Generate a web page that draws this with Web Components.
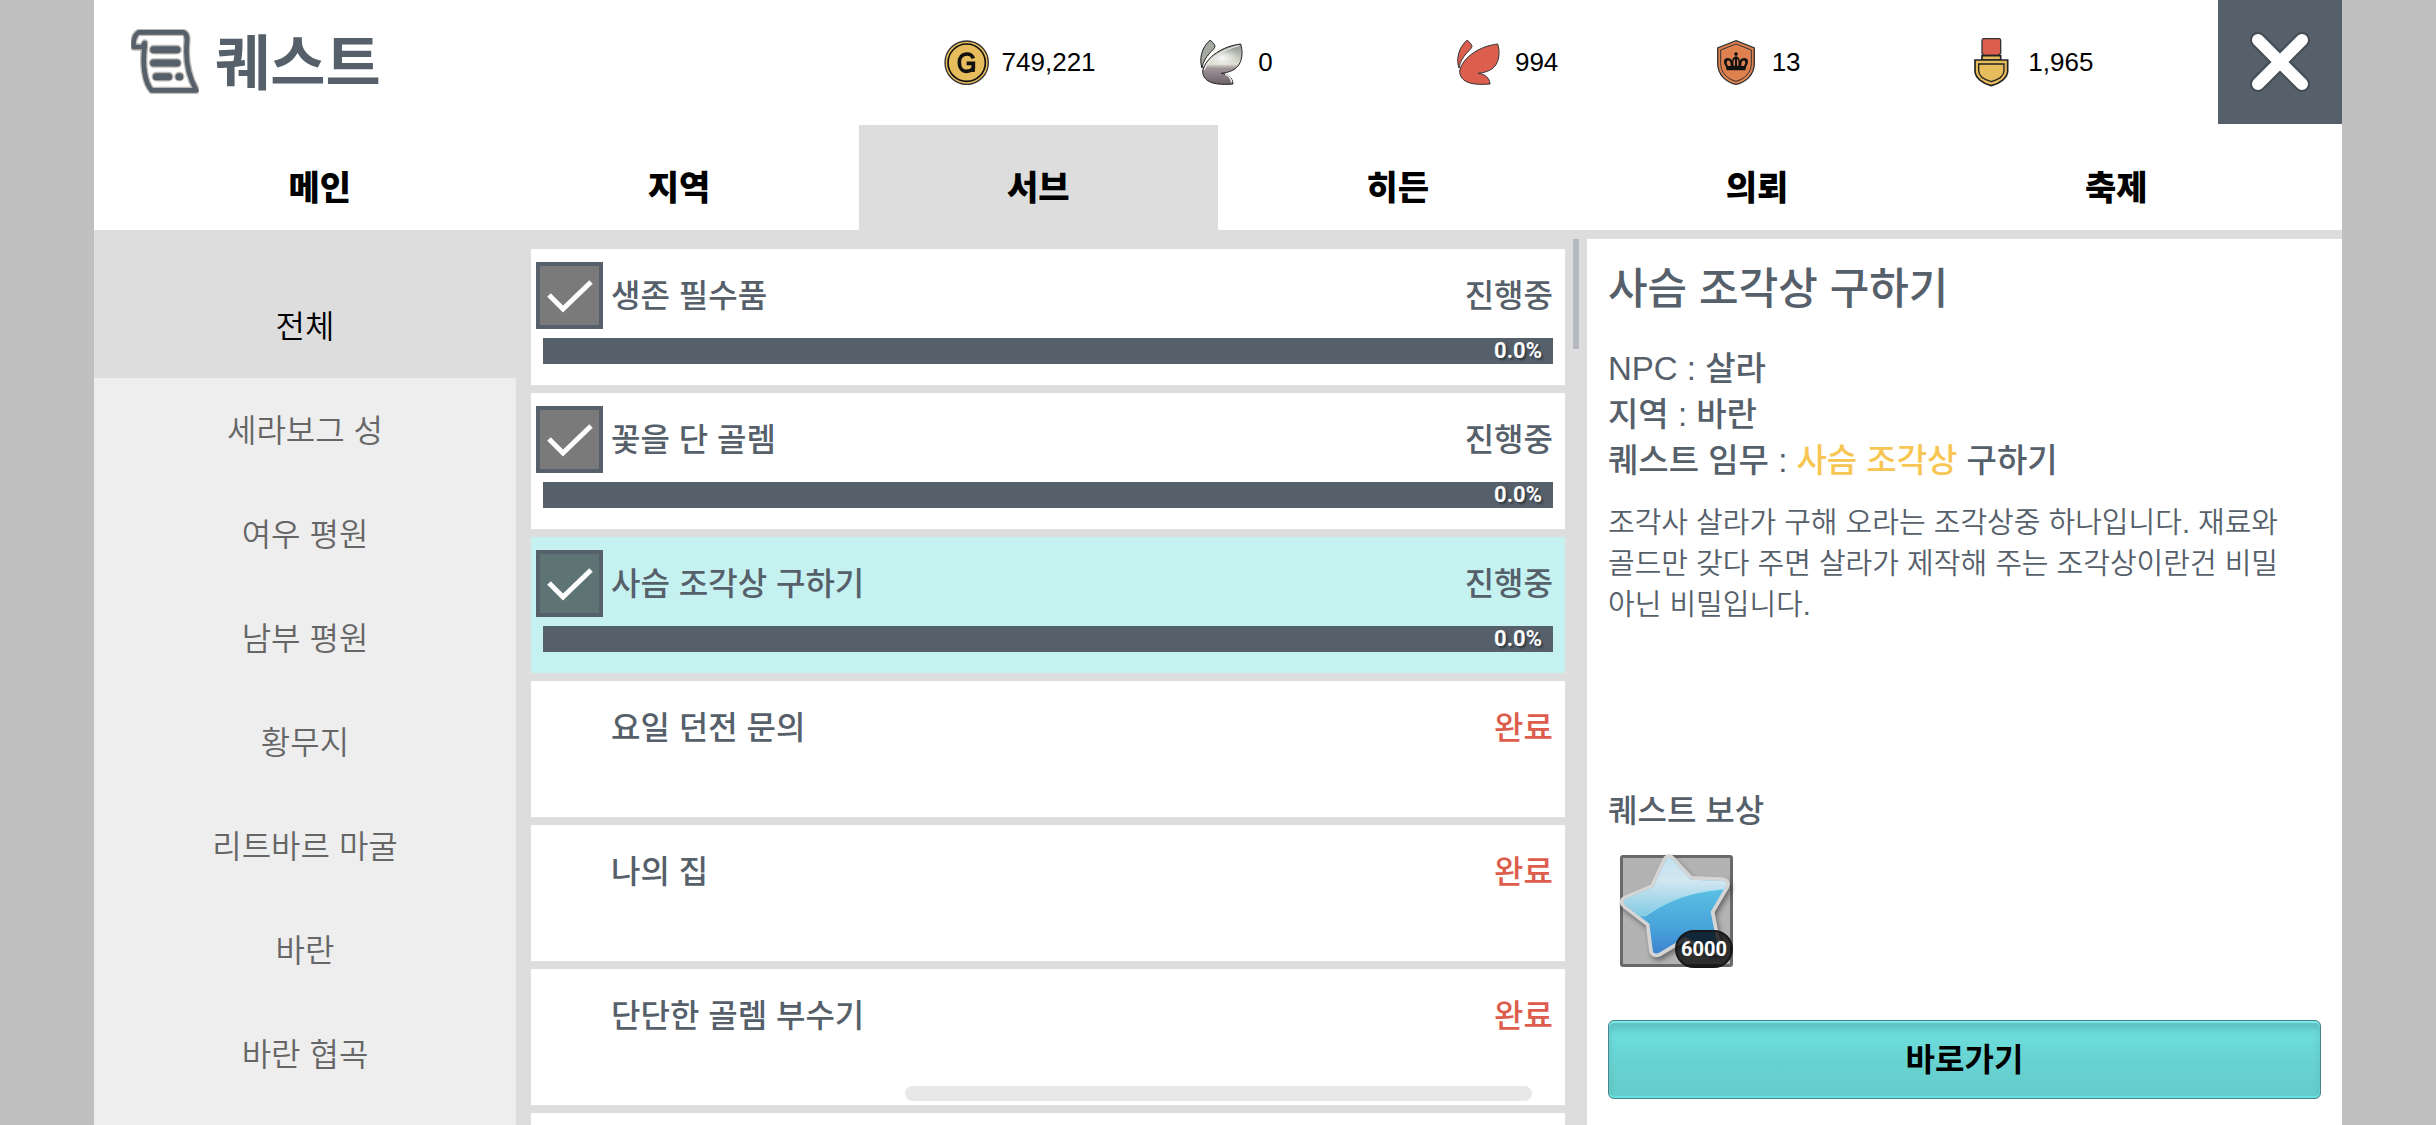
<!DOCTYPE html>
<html lang="ko">
<head>
<meta charset="utf-8">
<title>퀘스트</title>
<style>
  html, body { margin: 0; height: 100%; }
  body {
    background: #c0c0c0;
    color: #56606a;
    font-family: 'Liberation Sans', 'Noto Sans CJK KR', sans-serif;
    overflow: hidden;
  }
</style>
</head>
<body>
<quest-app></quest-app>

<script>
(function () {
  /* ── shared reset, prepended to every shadow root ──
     No universal margin/padding rule here: it would beat the :host box
     of the elements nested in that root. */
  var RESET = `
    :host, * { box-sizing: border-box; }
    h1, h2, h3, p, ul, button, input { margin: 0; padding: 0; }
    button { font: inherit; color: inherit; background: none; border: 0; cursor: pointer; }
    ul { list-style: none; }
    svg { display: block; }
  `;

  var WING = 'M8 92C18 50 70 18 122 12C128 30 128 55 118 72C108 90 85 98 64 100C82 102 98 112 99 132C50 136 8 130 8 92Z';
  var ANTENNA = 'M30 1C36 4 44 12 45 19C44 30 12 46 6 84C-3 60 4 22 30 1Z';
  var STAR = 'M138 16Q146 2 156 14L212 74L308 78Q324 82 316 96L272 170L293 276Q290 296 272 286L196 246L116 294Q100 300 98 284L88 206L16 150Q4 140 18 132L100 97Z';

  var ICONS = {
    gold: `
      <circle cx="68" cy="68" r="65" fill="#e6bc5c" stroke="#333" stroke-width="4"/>
      <circle cx="68" cy="68" r="56" fill="none" stroke="#111" stroke-width="5"/>
      <path d="M88 55C85 46 78 42 69 42C54 42 46 53 46 68C46 84 55 94 68 94C77 94 83 91 88 84V70H68" fill="none" stroke="#111" stroke-width="11"/>
      <path d="M88 74V96" stroke="#111" stroke-width="9"/>`,
    silver: `
      <defs><linearGradient id="g" x1="0" y1="0" x2="0" y2="1">
        <stop offset="0" stop-color="#8d958f"/><stop offset=".5" stop-color="#dcdccf"/>
        <stop offset=".6" stop-color="#a0969a"/><stop offset="1" stop-color="#6e6068"/>
      </linearGradient>
      <radialGradient id="r" cx=".5" cy=".6" r=".5">
        <stop offset="0" stop-color="#fff" stop-opacity=".9"/><stop offset="1" stop-color="#fff" stop-opacity="0"/>
      </radialGradient></defs>
      <path d="${ANTENNA}" fill="#a5aaa0" stroke="#222" stroke-width="3"/>
      <path d="${WING}" fill="url(#g)" stroke="#222" stroke-width="3"/>
      <path d="M14 76C34 48 76 26 118 18C122 40 120 60 112 74Z" fill="url(#r)"/>
      <path d="M13 90C26 52 70 28 118 17" fill="none" stroke="#f4f4f0" stroke-width="3"/>
      <path d="M76 103C88 108 94 116 95 128" fill="none" stroke="#eee" stroke-width="4"/>`,
    red: `
      <path d="${ANTENNA}" fill="#db5e4e" stroke="#333" stroke-width="3"/>
      <path d="${WING}" fill="#db5e4e" stroke="#333" stroke-width="3"/>`,
    shield: `
      <path d="M66 2L121 24V70C121 104 96 127 66 133C36 127 11 104 11 70V24Z" fill="#df814f" stroke="#333" stroke-width="4"/>
      <path d="M66 12L112 30V70C112 98 92 117 66 124C40 117 20 98 20 70V30Z" fill="none" stroke="#333" stroke-width="3"/>
      <path d="M38 91L35 79C26 66 30 54 40 54C48 54 52 58 55 62C55 54 59 50 66 50C73 50 77 54 77 62C80 58 84 54 92 54C102 54 106 66 97 79L94 91Z" fill="#111"/>
      <path d="M66 37V50M60 42H72" stroke="#111" stroke-width="5"/>
      <path d="M42 78C35 68 38 60 46 62C50 65 50 72 50 78M59 77C57 66 59 58 63 57V77M73 77C75 66 73 58 69 57V77M90 78C97 68 94 60 86 62C82 65 82 72 82 78" fill="#df814f"/>`,
    medal: `
      <path d="M40 -4H88Q92 -4 92 2V40L86 46H42L36 40V2Q36 -4 40 -4Z" fill="#db5e4e" stroke="#333" stroke-width="4"/>
      <path d="M36 47H92V60H36Z" fill="#e6bc5c" stroke="#222" stroke-width="5"/>
      <path d="M15 60H113V92C113 114 90 130 64 137C38 130 15 114 15 92Z" fill="#e6bc5c" stroke="#222" stroke-width="5"/>
      <path d="M26 72H102V92C102 107 84 119 64 125C44 119 26 107 26 92Z" fill="none" stroke="#222" stroke-width="4"/>`
  };

  function define(name, render) {
    customElements.define(name, class extends HTMLElement {
      connectedCallback() {
        if (this.shadowRoot) return;
        this.attachShadow({ mode: 'open' });
        var out = render(this);
        this.shadowRoot.innerHTML = '<style>' + RESET + out.style + '</style>' + out.html;
      }
    });
  }

  /* ── header ── */
  define('currency-item', function (el) {
    return {
      style: `
        :host { display: flex; align-items: center; gap: 13px; color: #000; font-size: 26px; line-height: 32px; }
        svg { width: 45px; height: 45px; flex: none; overflow: visible; }
      `,
      html: `<svg viewBox="0 0 135 135" aria-hidden="true">${ICONS[el.getAttribute('icon')]}</svg><span><slot></slot></span>`
    };
  });

  define('quest-header', function () {
    return {
      style: `
        :host { display: grid; grid-template-columns: 2fr 3fr 124px; height: 124px; flex: none; background: #fff; }
        .title { display: flex; align-items: center; gap: 16px; padding-left: 37px; }
        .title svg { width: 68px; height: 66px; }
        h1 { padding-top: 6px; font-size: 60px; line-height: 72px; font-weight: 700; }
        .wallet { display: grid; grid-template-columns: repeat(5, minmax(0, 1fr)); gap: 17px; padding-right: 8px; }
        .close { background: #56606a; display: flex; align-items: center; justify-content: center; }
        .close svg { width: 64px; height: 64px; }
      `,
      html: `
        <div class="title">
          <svg viewBox="0 0 204 198" fill="none" stroke="#56606a" stroke-linecap="round" stroke-linejoin="round" aria-hidden="true">
            <path d="M24 10H156C170 14 169 30 167 48C164 92 172 142 196 184H62C40 160 34 104 41 52V42L35 54H8C6 34 12 16 24 10Z" stroke="#bbb8b6" stroke-width="22"/>
            <path d="M24 10H156C170 14 169 30 167 48C164 92 172 142 196 184H62C40 160 34 104 41 52V42L35 54H8C6 34 12 16 24 10Z" stroke-width="14"/>
            <path d="M68 62H138M68 102H138M76 143H113M144 143H146" stroke="#bbb8b6" stroke-width="29"/>
            <path d="M68 62H138M68 102H138M76 143H113M144 143H146" stroke-width="21"/>
          </svg>
          <h1>퀘스트</h1>
        </div>
        <div class="wallet">
          <currency-item icon="gold">749,221</currency-item>
          <currency-item icon="silver">0</currency-item>
          <currency-item icon="red">994</currency-item>
          <currency-item icon="shield">13</currency-item>
          <currency-item icon="medal">1,965</currency-item>
        </div>
        <button class="close" type="button" aria-label="닫기">
          <svg viewBox="0 0 64 64" fill="none" stroke-linecap="round">
            <path d="M10 10L54 54M54 10L10 54" stroke="#434b52" stroke-width="16"/>
            <path d="M10 10L54 54M54 10L10 54" stroke="#fff" stroke-width="12"/>
          </svg>
        </button>`
    };
  });

  define('quest-tabs', function () {
    var tabs = ['메인', '지역', '서브', '히든', '의뢰', '축제'];
    return {
      style: `
        :host { display: block; flex: none; background: #fff; padding-top: 1px; }
        nav { display: grid; grid-template-columns: repeat(6, 1fr); padding: 0 46px; }
        button { height: 105px; padding-top: 20px; font-size: 34px; line-height: 48px; font-weight: 900; color: #000; }
        button[aria-current] { background: #ddd; }
      `,
      html: '<nav>' + tabs.map(function (t, i) {
        return '<button type="button"' + (i === 2 ? ' aria-current="page"' : '') + '>' + t + '</button>';
      }).join('') + '</nav>'
    };
  });

  /* ── left column ── */
  define('region-list', function () {
    var regions = ['전체', '세라보그 성', '여우 평원', '남부 평원', '황무지', '리트바르 마굴', '바란', '바란 협곡'];
    return {
      style: `
        :host { display: flex; flex-direction: column; padding-top: 44px; min-height: 0; overflow: hidden; }
        ul { flex: 1; background: #eee; }
        button { display: block; width: 100%; height: 104px; padding-top: 2px; font-size: 32px; line-height: 48px; font-weight: 350; color: #666; }
        button[aria-current] { background: #ddd; color: #000; }
      `,
      html: '<ul>' + regions.map(function (r, i) {
        return '<li><button type="button"' + (i === 0 ? ' aria-current="true"' : '') + '>' + r + '</button></li>';
      }).join('') + '</ul>'
    };
  });

  /* ── middle column ── */
  define('quest-row', function (el) {
    var state = el.getAttribute('state');
    var open = state === '진행중';
    return {
      style: `
        :host { display: block; flex: none; height: 136px; padding: 13px 12px 0 5px; background: #fff; }
        :host([selected]) { background: #c5f1f0; }
        .head { display: flex; align-items: center; height: 67px; font-size: 32px; line-height: 48px; font-weight: 500; padding-left: 75px; }
        .head.open { padding-left: 0; gap: 8px; }
        .check { position: relative; width: 67px; height: 67px; }
        input { appearance: none; display: block; width: 67px; height: 67px; border: 4px solid #56606a;
                background: rgba(0,0,0,.52); background-clip: padding-box; }
        /* tick drawn over the box */
        .check svg { position: absolute; inset: 0; pointer-events: none; }
        .name { flex: 1; }
        .state { color: #dd5d4c; }
        .open .state { color: inherit; }
        .bar { margin: 9px 0 0 7px; height: 26px; padding-right: 11px; background: #56606a; color: #fff; text-align: right;
               font: 700 22px/26px Roboto, sans-serif; text-shadow: 2px 2px 2px rgba(0,0,0,.4); }
      `,
      html: state ? `
        <div class="head ${open ? 'open' : ''}">
          ${open ? `<span class="check"><input type="checkbox" id="c" checked>
            <svg viewBox="0 0 67 67" fill="none" stroke="#fff" stroke-width="5"><path d="M13 33L27 47L55 20"/></svg></span>
            <label class="name" for="c"><slot></slot></label>` : '<span class="name"><slot></slot></span>'}
          <span class="state">${state}</span>
        </div>
        ${open ? '<div class="bar" role="progressbar" aria-valuenow="0">0.0%</div>' : ''}` : ''
    };
  });

  define('quest-list', function () {
    return {
      style: `
        :host { display: grid; grid-template-columns: minmax(0, 1fr) 6px; gap: 8px; padding: 0 8px 0 15px; min-height: 0; overflow: hidden; }
        .rows { display: flex; flex-direction: column; gap: 8px; padding-top: 19px; min-height: 0; }
        .thumb { height: 110px; margin-top: 9px; background: #b4babf; }
      `,
      html: '<div class="rows"><slot></slot></div><div class="thumb"></div>'
    };
  });

  /* ── right column ── */
  define('reward-item', function () {
    return {
      style: `
        :host { display: block; position: relative; width: 113px; height: 112px; border: 3px solid #696969; border-radius: 3px; background: #b3b3b3; }
        svg { position: absolute; left: -3px; top: -3px; width: 113px; height: 112px; overflow: visible; }
        span { position: absolute; right: -3px; bottom: -4px; padding: 0 4px; height: 38px; border: 2px solid #181818; border-radius: 19px;
               background: rgba(0,0,0,.74); color: #fff; font: 700 20px/34px Roboto, sans-serif; }
      `,
      html: `
        <svg viewBox="0 0 339 336" aria-hidden="true">
          <defs>
            <linearGradient id="b" x1="0" y1="0" x2="0" y2="1">
              <stop offset=".3" stop-color="#5bc0e2"/><stop offset=".65" stop-color="#48a3da"/><stop offset="1" stop-color="#3672cc"/>
            </linearGradient>
            <linearGradient id="s" x1="0" y1="0" x2="0" y2="1">
              <stop offset="0" stop-color="#bfe2f0"/><stop offset=".4" stop-color="#d3e7f0"/><stop offset="1" stop-color="#7cc9e3"/>
            </linearGradient>
            <clipPath id="k"><path d="${STAR}"/></clipPath>
          </defs>
          <path d="${STAR}" fill="#d5d5d5" stroke="#d5d5d5" stroke-width="22" stroke-linejoin="round" style="filter: drop-shadow(6px 10px 8px rgba(0,0,0,.4))"/>
          <g clip-path="url(#k)">
            <path d="M0 0H339V336H0Z" fill="url(#b)"/>
            <path d="M0 0H339V102C220 108 150 132 74 184L0 190Z" fill="url(#s)"/>
            <path d="M74 184C150 132 220 108 320 102" fill="none" stroke="#9bdcf0" stroke-width="3"/>
          </g>
        </svg>
        <span><slot></slot></span>`
    };
  });

  define('quest-detail', function () {
    return {
      style: `
        :host { display: flex; flex-direction: column; margin-top: 9px; padding: 22px 21px 26px; background: #fff; min-height: 0; }
        h2 { font-size: 43px; line-height: 56px; font-weight: 500; margin-bottom: 29px; }
        .info { font-size: 33px; line-height: 46px; font-weight: 500; }
        em { font-style: normal; color: #f7c652; }
        .text { margin: 19px 20px 0 0; font-size: 29px; line-height: 41px; font-weight: 350; word-break: keep-all; }
        h3 { margin-top: auto; font-size: 32px; line-height: 40px; font-weight: 500; }
        reward-item { margin: 24px 12px 53px; }
        .go {
          height: 79px; border: 1px solid #4a8388; border-radius: 6px; color: #000;
          background: linear-gradient(#6cdcda 20%, #67d3d1 55%, #64cbca);
          box-shadow: inset 0 2px 1px #7be9ea, inset 0 -2px 1px #66e2e3, inset 0 8px 6px rgba(80,160,165,.45);
          font-size: 32px; line-height: 48px; font-weight: 700;
        }
      `,
      html: `
        <h2>사슴 조각상 구하기</h2>
        <p class="info">NPC : 살라</p>
        <p class="info">지역 : 바란</p>
        <p class="info">퀘스트 임무 : <em>사슴 조각상</em> 구하기</p>
        <p class="text">조각사 살라가 구해 오라는 조각상중 하나입니다. 재료와 골드만 갖다 주면 살라가 제작해 주는 조각상이란건 비밀 아닌 비밀입니다.</p>
        <h3>퀘스트 보상</h3>
        <reward-item>6000</reward-item>
        <button class="go" type="button">바로가기</button>`
    };
  });

  /* ── whole screen ── */
  define('quest-app', function () {
    return {
      style: `
        :host { display: flex; flex-direction: column; height: 100vh; margin: 0 94px; background: #ddd; overflow: hidden; }
        main { flex: 1; display: grid; grid-template-columns: 422fr 1071fr 755fr; min-height: 0; }
        /* system home bar floats above the page */
        .home { position: absolute; left: 0; right: 0; bottom: 24px; width: 627px; height: 15px; margin: 0 auto; border-radius: 8px; background: rgba(226,226,226,.8); }
      `,
      html: `
        <quest-header></quest-header>
        <quest-tabs></quest-tabs>
        <main>
          <region-list></region-list>
          <quest-list>
            <quest-row state="진행중">생존 필수품</quest-row>
            <quest-row state="진행중">꽃을 단 골렘</quest-row>
            <quest-row state="진행중" selected>사슴 조각상 구하기</quest-row>
            <quest-row state="완료">요일 던전 문의</quest-row>
            <quest-row state="완료">나의 집</quest-row>
            <quest-row state="완료">단단한 골렘 부수기</quest-row>
            <quest-row></quest-row>
          </quest-list>
          <quest-detail></quest-detail>
        </main>
        <div class="home"></div>`
    };
  });
})();
</script>
</body>
</html>
